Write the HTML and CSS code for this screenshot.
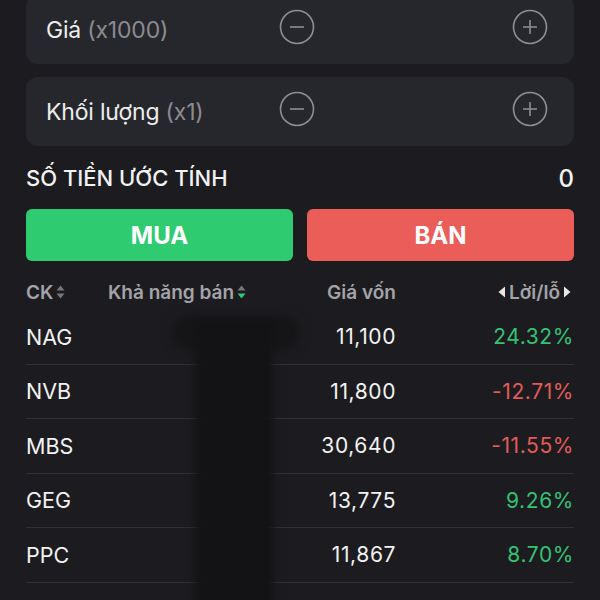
FILE: index.html
```html
<!DOCTYPE html>
<html lang="vi">
<head>
    <meta charset="UTF-8">
    <meta name="viewport" content="width=device-width, initial-scale=1.0">
    <title>Đặt lệnh</title>
    <link rel="stylesheet" href="styles.css">
</head>
<body>
    <div class="page">
        <div class="stepper">
            <div class="stepper-label">Giá <span class="unit">(x1000)</span></div>
            <button class="circle-btn" aria-label="Giảm">
                <svg viewBox="0 0 36 36"><circle cx="18" cy="18" r="16.5"/><path d="M11 18h14"/></svg>
            </button>
            <div class="stepper-value"></div>
            <button class="circle-btn" aria-label="Tăng">
                <svg viewBox="0 0 36 36"><circle cx="18" cy="18" r="16.5"/><path d="M11 18h14M18 11v14"/></svg>
            </button>
        </div>

        <div class="stepper">
            <div class="stepper-label">Khối lượng <span class="unit">(x1)</span></div>
            <button class="circle-btn" aria-label="Giảm">
                <svg viewBox="0 0 36 36"><circle cx="18" cy="18" r="16.5"/><path d="M11 18h14"/></svg>
            </button>
            <div class="stepper-value"></div>
            <button class="circle-btn" aria-label="Tăng">
                <svg viewBox="0 0 36 36"><circle cx="18" cy="18" r="16.5"/><path d="M11 18h14M18 11v14"/></svg>
            </button>
        </div>

        <div class="summary">
            <span class="summary-label">SỐ TIỀN ƯỚC TÍNH</span>
            <span class="summary-value">0</span>
        </div>

        <div class="actions">
            <button class="action buy">MUA</button>
            <button class="action sell">BÁN</button>
        </div>

        <div class="table">
            <div class="row head">
                <div class="cell">CK
                    <svg class="sort" viewBox="0 0 9 14"><path class="up" d="M4.5 0.5L8.5 5.5H0.5Z"/><path class="down" d="M4.5 13.5L8.5 8.5H0.5Z"/></svg>
                </div>
                <div class="cell">Khả năng bán
                    <svg class="sort" viewBox="0 0 9 14"><path class="up" d="M4.5 0.5L8.5 5.5H0.5Z"/><path class="down active" d="M4.5 13.5L8.5 8.5H0.5Z"/></svg>
                </div>
                <div class="cell num">Giá vốn</div>
                <div class="cell num">
                    <svg class="arrow" viewBox="0 0 8 12"><path d="M7 0.5V11.5L0.5 6Z"/></svg>
                    Lời/lỗ
                    <svg class="arrow" viewBox="0 0 8 12"><path d="M1 0.5V11.5L7.5 6Z"/></svg>
                </div>
            </div>
            <div class="row">
                <div class="cell">NAG</div>
                <div class="cell"></div>
                <div class="cell num">11,100</div>
                <div class="cell num up">24.32%</div>
            </div>
            <div class="row">
                <div class="cell">NVB</div>
                <div class="cell"></div>
                <div class="cell num">11,800</div>
                <div class="cell num down">-12.71%</div>
            </div>
            <div class="row">
                <div class="cell">MBS</div>
                <div class="cell"></div>
                <div class="cell num">30,640</div>
                <div class="cell num down">-11.55%</div>
            </div>
            <div class="row">
                <div class="cell">GEG</div>
                <div class="cell"></div>
                <div class="cell num">13,775</div>
                <div class="cell num up">9.26%</div>
            </div>
            <div class="row">
                <div class="cell">PPC</div>
                <div class="cell"></div>
                <div class="cell num">11,867</div>
                <div class="cell num up">8.70%</div>
            </div>
        </div>
    </div>

    <!-- vệt che thông tin trên ảnh chụp -->
    <div class="redact">
        <div class="redact-top"></div>
        <div class="redact-strip"></div>
    </div>
</body>
</html>
```

FILE: styles.css
```css
body {
    margin: 0;
    padding: 0;
    background-color: #1c1c20;
    font-family: Inter, "Noto Sans", sans-serif;
    color: #f2f2f2;
    height: 600px;
    overflow: hidden;
}

.page {
    padding: 0 26px;
    margin-top: -5px;
}

.stepper {
    display: flex;
    align-items: center;
    height: 69px;
    padding: 0 26px 0 20px;
    margin-bottom: 13px;
    background-color: #26272c;
    border-radius: 12px;
}

.stepper-label {
    width: 233px;
    font-size: 23px;
    color: #ededed;
    letter-spacing: -0.2px;
}

.unit {
    color: #8b8b90;
}

.stepper-value {
    flex: 1;
}

.circle-btn {
    width: 36px;
    height: 36px;
    padding: 0;
    background: none;
    border: none;
    margin-top: -5px;
}

.circle-btn svg {
    display: block;
    width: 36px;
    height: 36px;
    fill: none;
    stroke: #8e8e93;
    stroke-width: 1.6;
}

.summary {
    display: flex;
    justify-content: space-between;
    align-items: center;
    margin-top: 20px;
    height: 24px;
}

.summary-label {
    font-size: 22px;
    font-weight: 500;
}

.summary-value {
    font-size: 24px;
    font-weight: 500;
}

.actions {
    display: flex;
    gap: 14px;
    margin-top: 19px;
}

.action {
    flex: 1;
    height: 52px;
    border: none;
    border-radius: 6px;
    color: #ffffff;
    font-family: Inter, sans-serif;
    font-size: 24px;
    font-weight: 700;
    cursor: pointer;
}

.buy {
    background-color: #2ecb70;
}

.sell {
    background-color: #ea5d58;
}

.table {
    margin-top: 13px;
}

.row {
    display: grid;
    grid-template-columns: 82px 178px 110px 178px;
    align-items: center;
    box-sizing: border-box;
    height: 54.5px;
    border-bottom: 1px solid #303136;
    font-size: 21.5px;
}

.row.head {
    height: 36px;
    border-bottom: none;
    font-size: 19px;
    font-weight: 600;
    color: #a3a3a8;
}

.cell {
    display: flex;
    align-items: center;
}

.cell.num {
    justify-content: flex-end;
}

.row:not(.head) .cell.num {
    font-size: 21px;
    letter-spacing: 0.6px;
}

.cell.up {
    color: #35c173;
}

.cell.down {
    color: #e15b57;
}

.sort {
    width: 9px;
    height: 14px;
    margin-left: 3px;
}

.sort path {
    fill: #76767b;
}

.sort path.active {
    fill: #2ecb70;
}

.arrow {
    width: 8px;
    height: 12px;
    fill: #e6e6e6;
    margin: 0 3px;
}

.redact {
    position: absolute;
    left: 0;
    top: 0;
    width: 600px;
    height: 600px;
    pointer-events: none;
    filter: blur(4px);
}

.redact-top {
    position: absolute;
    left: 172px;
    top: 315px;
    width: 128px;
    height: 36px;
    background-color: #151517;
    border-radius: 18px;
}

.redact-strip {
    position: absolute;
    left: 195px;
    top: 322px;
    width: 78px;
    height: 290px;
    background-color: #131315;
}
```
